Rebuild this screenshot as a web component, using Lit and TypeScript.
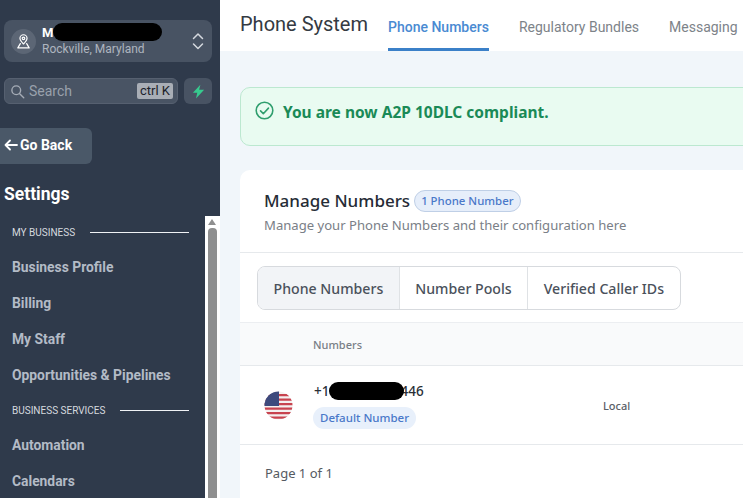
import { LitElement, html, css } from "lit";
import { customElement } from "lit/decorators.js";

@customElement("app-root")
export class AppRoot extends LitElement {
  static styles = css`
    :host { display: flex; width: 743px; height: 498px; overflow: hidden; font-family: Roboto, sans-serif; background: #f1f6fa; }
    * { box-sizing: border-box; }
    .side { width: 220px; flex: none; height: 498px; background: #2f3a4b; display: flex; flex-direction: column; overflow: hidden; }
    .loc { margin: 20px 8px 0 4px; height: 42px; border-radius: 8px; background: #485363; display: flex; align-items: center; padding: 0 8px 0 7px; position: relative; }
    .pin { width: 25px; height: 25px; border-radius: 50%; background: #5c6675; display: flex; align-items: center; justify-content: center; flex: none; }
    .loc-text { margin-left: 6px; flex: 1; line-height: 16px; }
    .loc-name { font-size: 13px; font-weight: 700; color: #fff; height: 16px; }
    .loc-sub { font-size: 12px; color: #aeb5bf; }
    .blob1 { position: absolute; left: 49px; top: 3px; width: 109px; height: 18px; background: #000; border-radius: 9px; }
    .search-row { display: flex; gap: 6px; margin: 16px 8px 0 4px; }
    .search { flex: 1; height: 26px; border-radius: 6px; background: #495464; border: 1px solid #566070; display: flex; align-items: center; padding: 0 4px 0 5px; }
    .search-label { margin-left: 4px; flex: 1; font-size: 14px; color: #99a1ac; }
    .kbd { background: #a9aeb6; color: #1c222b; font-size: 13px; height: 16px; line-height: 16px; padding: 0 3px; border-radius: 2px; }
    .bolt { width: 28px; height: 26px; border-radius: 6px; background: #485363; display: flex; align-items: center; justify-content: center; }
    .back { margin-top: 24px; width: 92px; height: 36px; background: #4a5868; border-radius: 0 6px 6px 0; display: flex; align-items: center; padding-left: 4px; gap: 2px; color: #fff; font-weight: 700; font-size: 14px; padding-bottom: 2px; }
    .settings { margin: 18px 0 0 4px; font-size: 17.5px; font-weight: 700; color: #fff; height: 24px; line-height: 24px; }
    .lower { flex: 1; margin-top: 10px; display: flex; min-height: 0; }
    .nav { flex: 1; padding: 8px 16px 0 12px; min-width: 0; }
    .sec { display: flex; align-items: center; height: 16px; font-size: 10px; color: #d5d9df; gap: 15px; }
    .sec i { flex: 1; height: 1px; background: #f0f2f5; }
    .sec.s2 { margin-top: 9px; }
    .item { font-size: 13.85px; font-weight: 700; color: #b3bbc6; height: 36px; line-height: 36px; }
    .sec + .item { margin-top: 9px; }
    .bar { width: 15px; background: #fff; flex: none; padding: 3px 4px 0 3px; display: flex; flex-direction: column; align-items: center; gap: 3px; }
    .arrow { width: 0; height: 0; border-left: 4px solid transparent; border-right: 4px solid transparent; border-bottom: 6px solid #8f8f8f; }
    .thumb { width: 9px; flex: 1; background: #8f8f8f; border-radius: 4px 4px 0 0; }

    .main { flex: 1; min-width: 0; display: flex; flex-direction: column; }
    .head { height: 51px; background: #fff; display: flex; padding-left: 20px; flex: none; }
    .title { font-size: 20px; color: #343a42; line-height: 48px; width: 148px; flex: none; }
    .tab { font-size: 14px; color: #7d8389; height: 51px; line-height: 55px; margin-right: 30px; white-space: nowrap; flex: none; }
    .tab.on { color: #4a8ad2; font-weight: 500; border-bottom: 3px solid #3b80c8; }
    .body { padding: 36px 0 0 20px; display: flex; flex-direction: column; gap: 24px; width: 543px; }
    .alert { height: 59px; width: 560px; background: #e9fbf1; border: 1px solid #bce8d0; border-radius: 10px 0 0 10px; display: flex; align-items: flex-start; padding: 12px 14px; gap: 9px; font-family: "Noto Sans", sans-serif; font-weight: 700; font-size: 15.5px; color: #1a8a57; line-height: 24px; }
    .alert svg { flex: none; margin-top: 1px; }
    .card { width: 560px; height: 330px; background: #fff; border-radius: 10px 0 0 0; font-family: "Noto Sans", sans-serif; }
    .ch { height: 83px; padding: 18px 24px 0; border-bottom: 1px solid #e6e9ec; }
    .ch-top { display: flex; align-items: center; gap: 4px; height: 24px; }
    .ch-title { font-size: 17px; font-weight: 500; color: #262c36; }
    .pill { height: 22px; line-height: 20px; font-size: 11.4px; font-weight: 500; color: #4a78c9; background: #e6eefa; border: 1px solid #bfcfe6; border-radius: 11px; padding: 0 6px; margin-top: 2px; }
    .ch-sub { font-size: 13.1px; color: #7a8087; margin-top: 4px; }
    .seg-wrap { height: 70px; padding: 13px 17px 0; border-bottom: 1px solid #eceef1; }
    .seg { display: inline-flex; height: 44px; border: 1px solid #d7dade; border-radius: 8px; overflow: hidden; font-size: 14.15px; font-weight: 500; color: #4a515b; }
    .seg span { display: flex; align-items: center; padding: 0 15.5px; border-left: 1px solid #dfe2e5; }
    .seg span:first-child { border-left: 0; background: #f2f4f7; }
    .th { height: 43px; background: #f9fafb; border-bottom: 1px solid #e6e9ec; padding-left: 73px; font-size: 11px; font-weight: 500; color: #787e85; line-height: 44px; }
    .tr { height: 79px; display: flex; align-items: center; padding-left: 24px; border-bottom: 1px solid #e6e9ec; position: relative; }
    .flag { width: 29px; height: 29px; border-radius: 50%; flex: none; }
    .num { margin-left: 20px; width: 290px; flex: none; }
    .num-v { font-size: 13.500px; color: #2a2f36; font-weight: 500; line-height: 18px; height: 18px; padding-left: 1px; }
    .gap { display: inline-block; width: 71px; }
    .dflt { display: inline-block; margin-top: 7px; font-size: 11.5px; font-weight: 500; color: #4a78c9; background: #e8f0fb; height: 22px; line-height: 22px; border-radius: 11px; padding: 0 7px; }
    .blob2 { position: absolute; left: 89px; top: 16px; width: 75px; height: 18px; border-radius: 9px; background: #000; }
    .local { font-size: 11px; font-weight: 500; color: #5b6067; }
    .page { padding: 19px 25px; font-size: 13px; font-weight: 400; color: #555a61; }
  `;

  render() {
    return html`
      <aside class="side">
        <div class="loc">
          <span class="pin">
            <svg width="17" height="17" viewBox="0 0 24 24" fill="none" stroke="#fff" stroke-width="1.7" stroke-linejoin="round" stroke-linecap="round"><path d="M12 15.5c3-3 5-5.2 5-8a5 5 0 0 0-10 0c0 2.800 2 5 5 8z"/><circle cx="12" cy="7.500" r="1.800"/><path d="M7.500 15 4 21h16l-3.500-6"/></svg>
          </span>
          <div class="loc-text">
            <div class="loc-name">M</div>
            <div class="loc-sub">Rockville, Maryland</div>
          </div>
          <svg width="12" height="20" viewBox="0 0 12 20" fill="none" stroke="#d5d9df" stroke-width="1.500" stroke-linecap="round" stroke-linejoin="round"><path d="M1.500 7.500 6 3l4.500 4.500M1.500 13 6 17.500l4.500-4.500"/></svg>
          <span class="blob1"></span>
        </div>
        <div class="search-row">
          <div class="search">
            <svg width="15" height="15" viewBox="0 0 24 24" fill="none" stroke="#a5acb6" stroke-width="2.200" stroke-linecap="round"><circle cx="10" cy="10" r="7"/><path d="M15.500 15.500 22 22"/></svg>
            <span class="search-label">Search</span>
            <span class="kbd">ctrl K</span>
          </div>
          <div class="bolt">
            <svg width="15" height="15" viewBox="0 0 24 24" fill="#37ca8e"><path d="M15 1 3 14h7l-2 9 13-14h-8z"/></svg>
          </div>
        </div>
        <div class="back">
          <svg width="14" height="12" viewBox="0 0 14 12" fill="none" stroke="#fff" stroke-width="1.800" stroke-linecap="round" stroke-linejoin="round"><path d="M13 6H1.500M6 1.500 1.500 6 6 10.500"/></svg>
          Go Back
        </div>
        <div class="settings">Settings</div>
        <div class="lower">
          <nav class="nav">
            <div class="sec"><span>MY BUSINESS</span><i></i></div>
            <div class="item">Business Profile</div>
            <div class="item">Billing</div>
            <div class="item">My Staff</div>
            <div class="item">Opportunities &amp; Pipelines</div>
            <div class="sec s2"><span>BUSINESS SERVICES</span><i></i></div>
            <div class="item">Automation</div>
            <div class="item">Calendars</div>
          </nav>
          <div class="bar"><span class="arrow"></span><span class="thumb"></span></div>
        </div>
      </aside>
      <main class="main">
        <header class="head">
          <div class="title">Phone System</div>
          <div class="tab on">Phone Numbers</div>
          <div class="tab">Regulatory Bundles</div>
          <div class="tab">Messaging</div>
        </header>
        <div class="body">
          <div class="alert">
            <svg width="19" height="19" viewBox="0 0 24 24" fill="none" stroke="#2f9e6e" stroke-width="2" stroke-linecap="round" stroke-linejoin="round"><circle cx="12" cy="12" r="10.500"/><path d="m7 12.500 3.500 3.500L17 9"/></svg>
            You are now A2P 10DLC compliant.
          </div>
          <section class="card">
            <div class="ch">
              <div class="ch-top"><span class="ch-title">Manage Numbers</span><span class="pill">1 Phone Number</span></div>
              <div class="ch-sub">Manage your Phone Numbers and their configuration here</div>
            </div>
            <div class="seg-wrap">
              <div class="seg"><span>Phone Numbers</span><span>Number Pools</span><span>Verified Caller IDs</span></div>
            </div>
            <div class="th">Numbers</div>
            <div class="tr">
              <svg class="flag" viewBox="0 0 29 29">
                <defs><clipPath id="c"><circle cx="14.500" cy="14.500" r="14"/></clipPath></defs>
                <g clip-path="url(#c)">
                  <rect width="29" height="29" fill="#f4f0f0"/>
                  <path d="M0 3h29v2.200H0zM0 7.500h29v2.200H0zM0 12h29v2.200H0zM0 16.500h29v2.200H0zM0 21h29v2.200H0zM0 25.500h29v2.200H0z" fill="#c8434f"/>
                  <rect width="15" height="15" fill="#3d4a7d"/>
                </g>
              </svg>
              <div class="num">
                <div class="num-v">+1<span class="gap"></span>446</div>
                <span class="dflt">Default Number</span>
              </div>
              <span class="local">Local</span>
              <span class="blob2"></span>
            </div>
            <div class="page">Page 1 of 1</div>
          </section>
        </div>
      </main>
    `;
  }
}
